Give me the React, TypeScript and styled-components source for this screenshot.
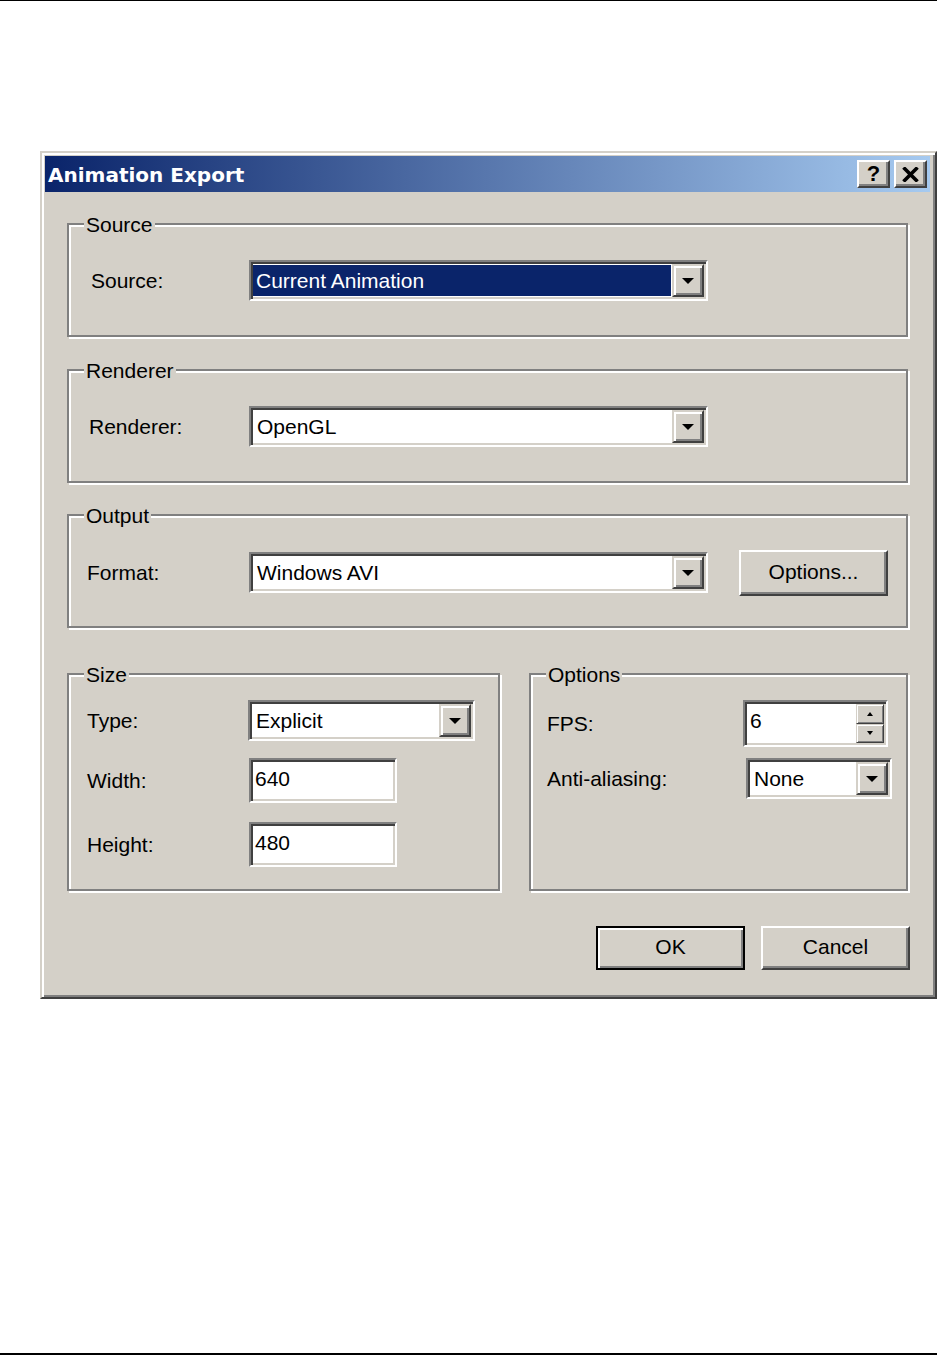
import React from "react";
import styled, { createGlobalStyle } from "styled-components";

const FACE = "#d4d0c8";
const SHADOW = "#808080";
const DARK = "#404040";
const NAVY = "#0a246a";

const GlobalStyle = createGlobalStyle`
  html, body { margin: 0; padding: 0; background: #fff; }
  body { font-family: "Liberation Sans", Arial, sans-serif; color: #000; }
  * { box-sizing: border-box; }
`;

const Page = styled.div`
  width: 937px;
  height: 1355px;
  display: flex;
  flex-direction: column;
  border-top: 1px solid #000;
  overflow: hidden;
`;

const BottomRule = styled.div`
  margin-top: auto;
  height: 2px;
  background: #000;
`;

const Dialog = styled.div`
  margin: 150px 0 0 40px;
  width: 897px;
  height: 848px;
  flex-shrink: 0;
  background: ${FACE};
  border: 2px solid;
  border-color: ${FACE} ${DARK} ${DARK} ${FACE};
  box-shadow: inset 2px 2px 0 #fff, inset -2px -2px 0 ${SHADOW};
  padding: 3px 5px 0 3px;
  display: flex;
  flex-direction: column;
`;

const TitleBar = styled.div`
  height: 36px;
  flex-shrink: 0;
  display: flex;
  align-items: center;
  padding: 0 3px 0 3px;
  background: linear-gradient(to right, ${NAVY} 0%, #a6caf0 100%);
`;

const TitleText = styled.span`
  font-family: "DejaVu Sans", Verdana, sans-serif;
  font-weight: bold;
  font-size: 20px;
  line-height: 24px;
  color: #fff;
  padding-top: 1px;
`;

const CaptionButtons = styled.div`
  margin-left: auto;
  display: flex;
  gap: 4px;
`;

const CaptionButton = styled.div`
  width: 33px;
  height: 28px;
  background: ${FACE};
  border: 2px solid;
  border-color: #fff ${DARK} ${DARK} #fff;
  box-shadow: inset -2px -2px 0 ${SHADOW};
  display: flex;
  align-items: center;
  justify-content: center;
  font-family: "Liberation Sans", Arial, sans-serif;
  font-weight: bold;
  font-size: 22px;
  line-height: 22px;
  color: #000;
`;

const Body = styled.div`
  flex: 1;
  display: flex;
  flex-direction: column;
  padding: 31px 22px 0 22px;
`;

const GroupBox = styled.div<{ $top?: number; $height: number; $padTop: number; $width?: number }>`
  position: relative;
  margin-top: ${(p) => p.$top ?? 0}px;
  height: ${(p) => p.$height}px;
  width: ${(p) => (p.$width ? `${p.$width}px` : "auto")};
  flex-shrink: 0;
  border: 2px solid ${SHADOW};
  box-shadow: inset 2px 2px 0 #fff, 2px 2px 0 #fff;
  padding-top: ${(p) => p.$padTop}px;
  display: flex;
  flex-direction: column;
`;

const Legend = styled.span`
  position: absolute;
  top: -12px;
  left: 15px;
  padding: 0 2px;
  background: ${FACE};
  font-size: 21px;
  line-height: 24px;
`;

const Row = styled.div<{ $height: number; $gap?: number }>`
  display: flex;
  align-items: center;
  height: ${(p) => p.$height}px;
  margin-top: ${(p) => p.$gap ?? 0}px;
  flex-shrink: 0;
`;

const Label = styled.span<{ $indent: number; $width: number }>`
  width: ${(p) => p.$width}px;
  padding-left: ${(p) => p.$indent}px;
  flex-shrink: 0;
  font-size: 21px;
  line-height: 24px;
`;

const Sunken = styled.div<{ $width: number; $height: number; $offset?: number }>`
  width: ${(p) => p.$width}px;
  height: ${(p) => p.$height}px;
  margin-left: ${(p) => p.$offset ?? 0}px;
  flex-shrink: 0;
  background: #fff;
  border: 2px solid;
  border-color: ${SHADOW} #fff #fff ${SHADOW};
  box-shadow: inset 2px 2px 0 ${DARK}, inset -2px -2px 0 ${FACE};
  padding: 2px;
  display: flex;
  align-items: stretch;
`;

const ValueText = styled.span<{ $selected?: boolean; $pad?: number; $lift?: number }>`
  flex: 1;
  display: flex;
  align-items: center;
  margin: ${(p) => (p.$selected ? "1px 1px 1px 0" : "0")};
  padding-left: ${(p) => p.$pad ?? 4}px;
  padding-bottom: ${(p) => p.$lift ?? 0}px;
  background: ${(p) => (p.$selected ? NAVY : "transparent")};
  color: ${(p) => (p.$selected ? "#fff" : "#000")};
  font-size: 21px;
  line-height: 24px;
  white-space: nowrap;
  overflow: hidden;
`;

const DropButton = styled.div`
  width: 32px;
  flex-shrink: 0;
  background: ${FACE};
  border: 2px solid;
  border-color: ${FACE} ${DARK} ${DARK} ${FACE};
  box-shadow: inset 2px 2px 0 #fff, inset -2px -2px 0 ${SHADOW};
  display: flex;
  align-items: center;
  justify-content: center;
`;

const SpinColumn = styled.div`
  width: 28px;
  flex-shrink: 0;
  display: flex;
  flex-direction: column;
`;

const SpinButton = styled.div`
  flex: 1;
  background: ${FACE};
  border: 1px solid;
  border-color: ${FACE} ${DARK} ${DARK} ${FACE};
  box-shadow: inset 1px 1px 0 #fff, inset -1px -1px 0 ${SHADOW};
  display: flex;
  align-items: center;
  justify-content: center;
`;

const PushButton = styled.div<{ $default?: boolean; $offset?: number; $height?: number }>`
  width: 149px;
  height: ${(p) => p.$height ?? 44}px;
  margin-left: ${(p) => p.$offset ?? 0}px;
  flex-shrink: 0;
  background: ${FACE};
  border: 2px solid;
  border-color: ${(p) => (p.$default ? "#000" : `#fff ${DARK} ${DARK} #fff`)};
  box-shadow: ${(p) =>
    p.$default
      ? `inset 2px 2px 0 #fff, inset -2px -2px 0 ${SHADOW}`
      : `inset -2px -2px 0 ${SHADOW}`};
  display: flex;
  align-items: center;
  justify-content: center;
  font-size: 21px;
  line-height: 24px;
  padding-bottom: 2px;
`;

const GroupRow = styled.div`
  display: flex;
  gap: 29px;
  margin-top: 45px;
`;

const ButtonRow = styled.div`
  display: flex;
  justify-content: flex-end;
  gap: 16px;
  margin-top: 35px;
  margin-right: -2px;
`;

const Arrow = ({ w = 12, h = 6 }: { w?: number; h?: number }) => (
  <svg width={w} height={h} viewBox={`0 0 ${w} ${h}`} style={{ display: "block" }}>
    <polygon points={`0,0 ${w},0 ${w / 2},${h}`} fill="#000" />
  </svg>
);

const UpArrow = () => (
  <svg width={6} height={4} viewBox="0 0 6 4" style={{ display: "block" }}>
    <polygon points="0,4 6,4 3,0" fill="#000" />
  </svg>
);

const DownArrow = () => (
  <svg width={6} height={4} viewBox="0 0 6 4" style={{ display: "block" }}>
    <polygon points="0,0 6,0 3,4" fill="#000" />
  </svg>
);

const CloseGlyph = () => (
  <svg width={17} height={15} viewBox="0 0 17 15" style={{ display: "block" }}>
    <path d="M1.5 0.5 L15.5 14.5 M15.5 0.5 L1.5 14.5" stroke="#000" strokeWidth={3.6} />
  </svg>
);

const Combo = ({
  width,
  value,
  selected,
  offset,
}: {
  width: number;
  value: string;
  selected?: boolean;
  offset?: number;
}) => (
  <Sunken $width={width} $height={41} $offset={offset}>
    <ValueText $selected={selected} $pad={selected ? 3 : 4}>
      {value}
    </ValueText>
    <DropButton>
      <Arrow />
    </DropButton>
  </Sunken>
);

export default function App() {
  return (
    <Page>
      <GlobalStyle />
      <Dialog>
        <TitleBar>
          <TitleText>Animation Export</TitleText>
          <CaptionButtons>
            <CaptionButton>?</CaptionButton>
            <CaptionButton>
              <CloseGlyph />
            </CaptionButton>
          </CaptionButtons>
        </TitleBar>
        <Body>
          <GroupBox $height={114} $padTop={35}>
            <Legend>Source</Legend>
            <Row $height={41}>
              <Label $indent={22} $width={180}>Source:</Label>
              <Combo width={459} value="Current Animation" selected />
            </Row>
          </GroupBox>

          <GroupBox $top={32} $height={114} $padTop={35}>
            <Legend>Renderer</Legend>
            <Row $height={41}>
              <Label $indent={20} $width={180}>Renderer:</Label>
              <Combo width={459} value="OpenGL" />
            </Row>
          </GroupBox>

          <GroupBox $top={31} $height={114} $padTop={36}>
            <Legend>Output</Legend>
            <Row $height={41}>
              <Label $indent={18} $width={180}>Format:</Label>
              <Combo width={459} value="Windows AVI" />
              <PushButton $offset={31} $height={46}>Options...</PushButton>
            </Row>
          </GroupBox>

          <GroupRow>
            <GroupBox $height={218} $padTop={25} $width={433}>
              <Legend>Size</Legend>
              <Row $height={41}>
                <Label $indent={18} $width={179}>Type:</Label>
                <Combo width={227} value="Explicit" />
              </Row>
              <Row $height={45} $gap={17}>
                <Label $indent={18} $width={180}>Width:</Label>
                <Sunken $width={148} $height={45}>
                  <ValueText $pad={2} $lift={4}>640</ValueText>
                </Sunken>
              </Row>
              <Row $height={45} $gap={19}>
                <Label $indent={18} $width={180}>Height:</Label>
                <Sunken $width={148} $height={45}>
                  <ValueText $pad={2} $lift={4}>480</ValueText>
                </Sunken>
              </Row>
            </GroupBox>

            <GroupBox $height={218} $padTop={25} $width={379}>
              <Legend>Options</Legend>
              <Row $height={47}>
                <Label $indent={16} $width={212}>FPS:</Label>
                <Sunken $width={145} $height={47}>
                  <ValueText $pad={3} $lift={6}>6</ValueText>
                  <SpinColumn>
                    <SpinButton>
                      <UpArrow />
                    </SpinButton>
                    <SpinButton>
                      <DownArrow />
                    </SpinButton>
                  </SpinColumn>
                </Sunken>
              </Row>
              <Row $height={41} $gap={11}>
                <Label $indent={16} $width={212}>Anti-aliasing:</Label>
                <Combo width={146} value="None" offset={3} />
              </Row>
            </GroupBox>
          </GroupRow>

          <ButtonRow>
            <PushButton $default>OK</PushButton>
            <PushButton>Cancel</PushButton>
          </ButtonRow>
        </Body>
      </Dialog>
      <BottomRule />
    </Page>
  );
}
